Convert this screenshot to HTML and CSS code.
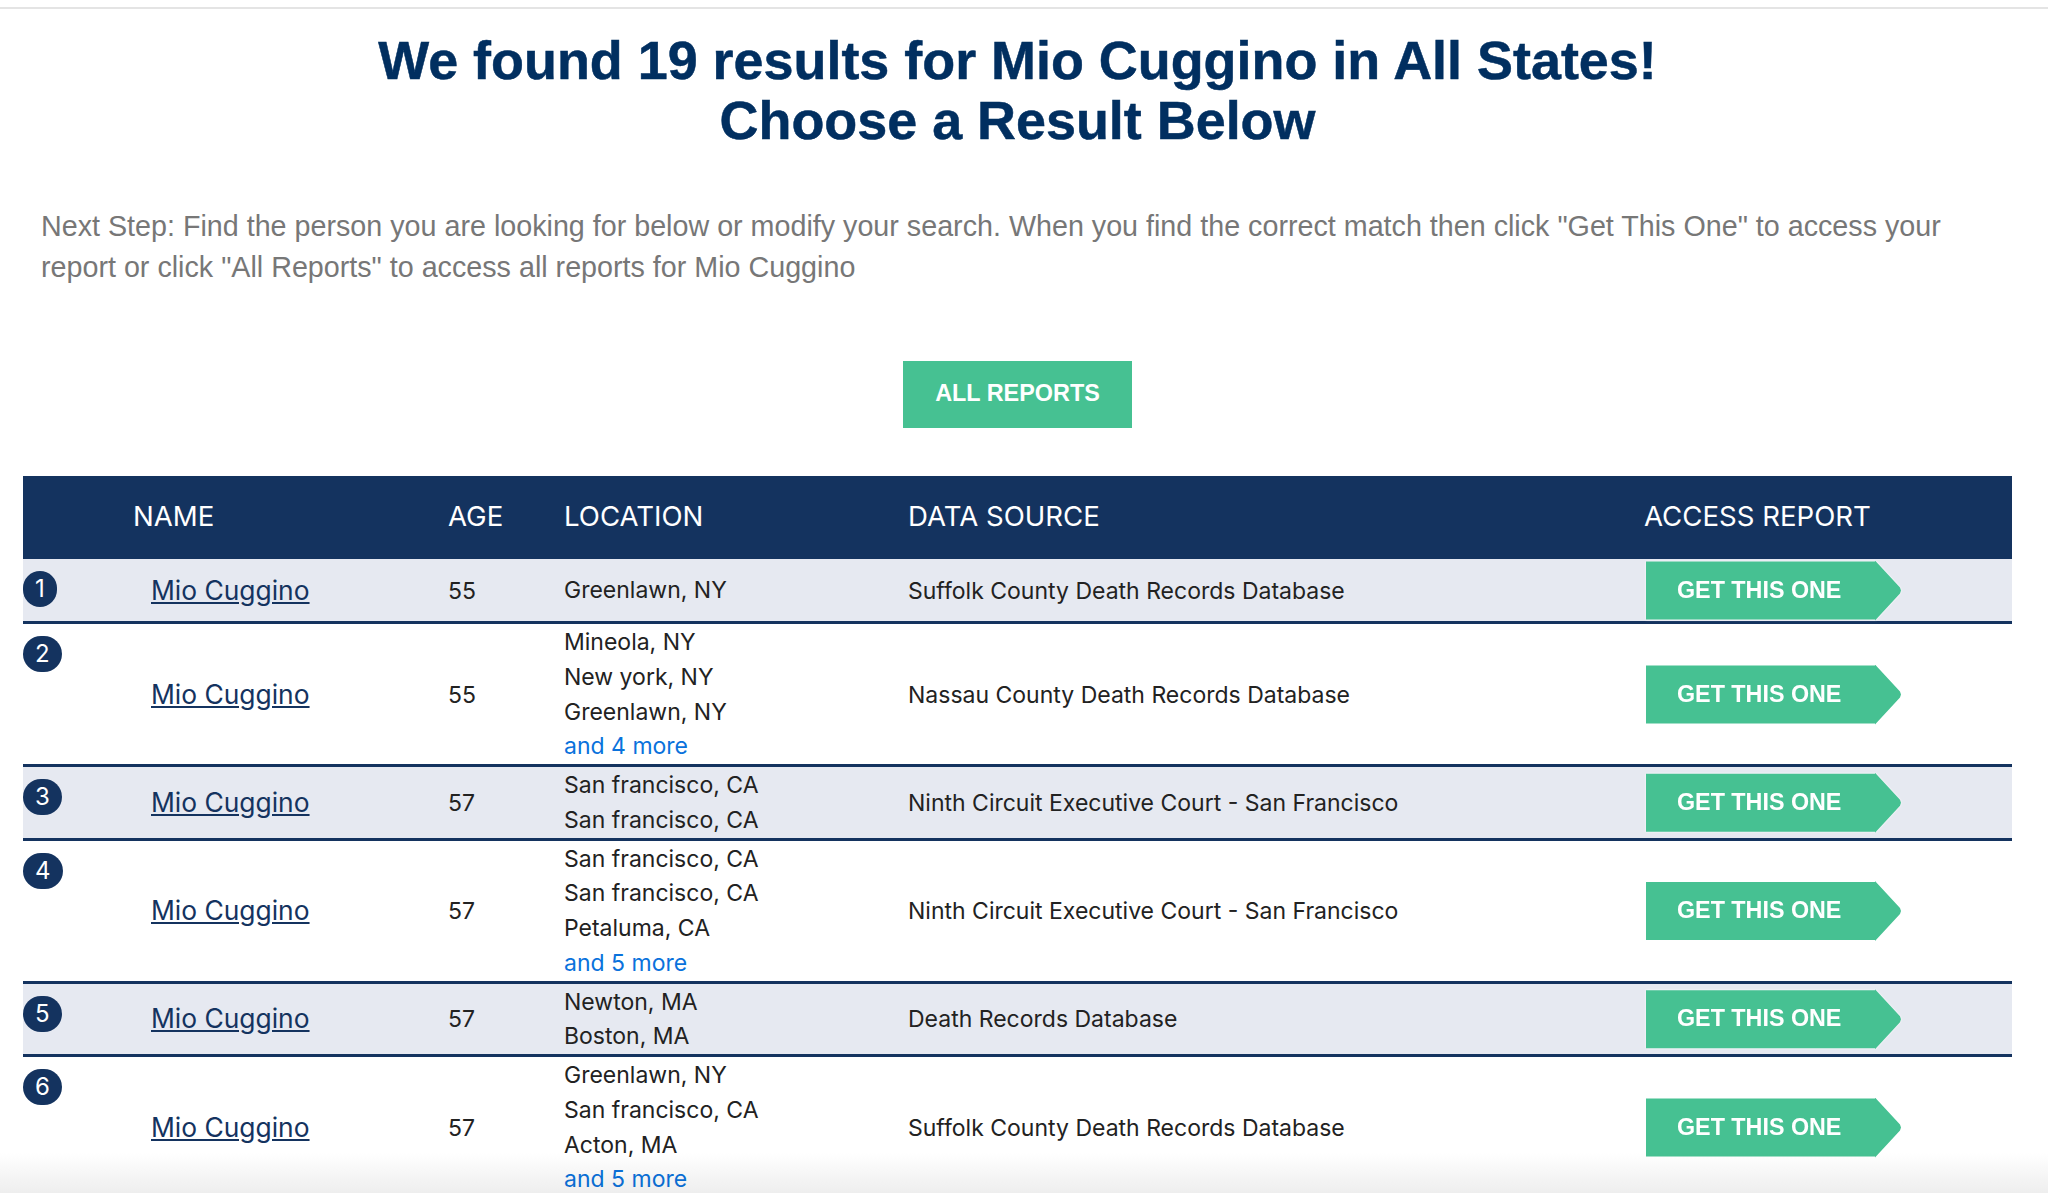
FILE: index.html
```html
<!DOCTYPE html>
<html lang="en">
<head>
<meta charset="utf-8">
<title>Results</title>
<link rel="stylesheet" href="styles.css">
</head>
<body>
<main class="page">
  <h1 class="title">We found 19 results for Mio Cuggino in All States!<br>Choose a Result Below</h1>
  <p class="intro">Next Step: Find the person you are looking for below or modify your search. When you find the correct match then click "Get This One" to access your report or click "All Reports" to access all reports for Mio Cuggino</p>
  <div class="all-wrap"><a class="all" href="#">ALL REPORTS</a></div>
  <table class="results">
    <colgroup><col class="c-name"><col class="c-age"><col class="c-loc"><col class="c-src"><col class="c-acc"></colgroup>
    <thead><tr><th class="th-name">NAME</th><th>AGE</th><th>LOCATION</th><th>DATA SOURCE</th><th>ACCESS REPORT</th></tr></thead>
    <tbody>
      <tr class="odd">
        <td class="name"><span class="badge">1</span><a href="#">Mio Cuggino</a></td><td>55</td>
        <td class="loc">Greenlawn, NY</td><td>Suffolk County Death Records Database</td>
        <td class="acc"><a class="get" href="#"><span>GET THIS ONE</span></a></td>
      </tr>
      <tr>
        <td class="name"><span class="badge">2</span><a href="#">Mio Cuggino</a></td><td>55</td>
        <td class="loc">Mineola, NY<br>New york, NY<br>Greenlawn, NY<br><a class="more" href="#">and 4 more</a></td><td>Nassau County Death Records Database</td>
        <td class="acc"><a class="get" href="#"><span>GET THIS ONE</span></a></td>
      </tr>
      <tr class="odd">
        <td class="name"><span class="badge">3</span><a href="#">Mio Cuggino</a></td><td>57</td>
        <td class="loc">San francisco, CA<br>San francisco, CA</td><td>Ninth Circuit Executive Court - San Francisco</td>
        <td class="acc"><a class="get" href="#"><span>GET THIS ONE</span></a></td>
      </tr>
      <tr>
        <td class="name"><span class="badge">4</span><a href="#">Mio Cuggino</a></td><td>57</td>
        <td class="loc">San francisco, CA<br>San francisco, CA<br>Petaluma, CA<br><a class="more" href="#">and 5 more</a></td><td>Ninth Circuit Executive Court - San Francisco</td>
        <td class="acc"><a class="get" href="#"><span>GET THIS ONE</span></a></td>
      </tr>
      <tr class="odd">
        <td class="name"><span class="badge">5</span><a href="#">Mio Cuggino</a></td><td>57</td>
        <td class="loc">Newton, MA<br>Boston, MA</td><td>Death Records Database</td>
        <td class="acc"><a class="get" href="#"><span>GET THIS ONE</span></a></td>
      </tr>
      <tr>
        <td class="name"><span class="badge">6</span><a href="#">Mio Cuggino</a></td><td>57</td>
        <td class="loc">Greenlawn, NY<br>San francisco, CA<br>Acton, MA<br><a class="more" href="#">and 5 more</a></td><td>Suffolk County Death Records Database</td>
        <td class="acc"><a class="get" href="#"><span>GET THIS ONE</span></a></td>
      </tr>
    </tbody>
  </table>
</main>
<div class="fade"></div>
</body>
</html>
```
FILE: styles.css
```css
* { box-sizing: border-box; }
html, body { margin: 0; height: 100%; overflow: hidden; background: #fff; }
body { font-family: Inter, "Liberation Sans", sans-serif; color: #222; }
.page { border-top: 7px solid #fff; box-shadow: inset 0 2px 0 #e4e4e4; padding: 23px 36px 0 23px; }
.title { margin: 0; font: bold 53.9px/60px "Liberation Sans", sans-serif; color: #012f60; text-align: center; -webkit-text-stroke: 0.5px #012f60; }
.intro { margin: 56px 0 0 18px; font: 28.7px/41px "Liberation Sans", sans-serif; color: #777; max-width: 1945px; }
.all-wrap { display: flex; justify-content: center; margin-top: 73px; }
.all { display: block; width: 229px; height: 67px; background: #46c192; color: #fff; font: bold 23.4px/64px "Liberation Sans", sans-serif; text-align: center; text-decoration: none; }
.results { width: 1989px; margin-top: 48px; border-collapse: separate; border-spacing: 0; table-layout: fixed; font-size: 23px; }
.c-name { width: 425px; } .c-age { width: 116px; } .c-loc { width: 344px; } .c-src { width: 736px; } .c-acc { width: 368px; }
th { height: 83px; background: #14335f; color: #fff; font-weight: 400; font-size: 27.6px; text-align: left; padding: 0 0 3px; }
.th-name { padding-left: 110px; }
td { padding: 2px 0 0; border-bottom: 3px solid #14335f; line-height: 35px; vertical-align: middle; }
tr.odd td { background: #e6e9f1; }
td.loc { padding-top: 1px; line-height: 34.75px; }
td.acc { padding-top: 0; }
td.name { position: relative; padding-left: 128px; height: 65px; }
.name a { color: #14335f; font-size: 26.4px; }
.badge { position: absolute; left: 0; top: 12px; height: 36px; padding: 0 12px; border-radius: 18px; background: #14335f; color: #fff; font-size: 24px; line-height: 36px; }
.more { color: #0a72dc; text-decoration: none; }
.get { display: block; width: 256px; margin: 1px 0 0 2px; filter: drop-shadow(0 0 1px #fff); text-decoration: none; }
.get span { display: block; height: 60px; padding-left: 31px; background: #46c192; color: #fff; font: bold 23.3px/59px "Liberation Sans", sans-serif; clip-path: polygon(0 1px, 229px 1px, 229px 0, 254px 27px, 255px 30px, 254px 33px, 229px 60px, 229px 59px, 0 59px); }
.fade { position: fixed; left: 0; right: 0; bottom: 0; height: 40px; background: linear-gradient(#ffffff, #eeeeee); mix-blend-mode: multiply; pointer-events: none; }
```
